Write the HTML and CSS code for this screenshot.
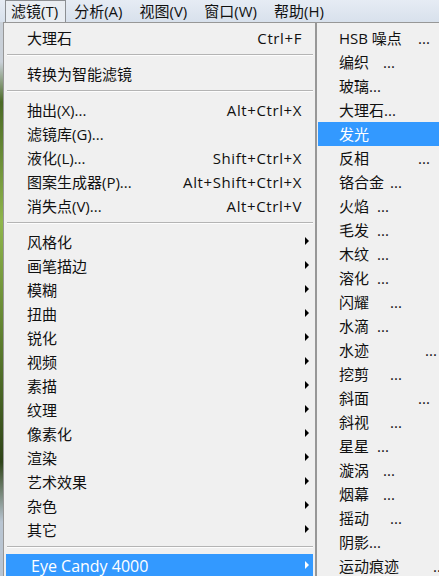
FILE: index.html
```html
<!DOCTYPE html>
<html lang="zh-CN">
<head>
    <meta charset="UTF-8">
    <title>滤镜菜单</title>
    <link rel="stylesheet" href="styles.css">
</head>
<body>
    <div class="menubar">
        <span class="bar-item open">滤镜(T)</span>
        <span class="bar-item">分析(A)</span>
        <span class="bar-item">视图(V)</span>
        <span class="bar-item">窗口(W)</span>
        <span class="bar-item">帮助(H)</span>
    </div>
    <div class="stage">
        <div class="edge"></div>
        <div class="menu">
            <div class="item"><span class="name">大理石</span><span class="key">Ctrl+F</span><span class="arrow"></span></div>
            <div class="sep"></div>
            <div class="item"><span class="name">转换为智能滤镜</span><span class="arrow"></span></div>
            <div class="sep"></div>
            <div class="item"><span class="name">抽出(X)...</span><span class="key">Alt+Ctrl+X</span><span class="arrow"></span></div>
            <div class="item"><span class="name">滤镜库(G)...</span><span class="arrow"></span></div>
            <div class="item"><span class="name">液化(L)...</span><span class="key">Shift+Ctrl+X</span><span class="arrow"></span></div>
            <div class="item"><span class="name">图案生成器(P)...</span><span class="key">Alt+Shift+Ctrl+X</span><span class="arrow"></span></div>
            <div class="item"><span class="name">消失点(V)...</span><span class="key">Alt+Ctrl+V</span><span class="arrow"></span></div>
            <div class="sep"></div>
            <div class="item"><span class="name">风格化</span><span class="arrow sub"></span></div>
            <div class="item"><span class="name">画笔描边</span><span class="arrow sub"></span></div>
            <div class="item"><span class="name">模糊</span><span class="arrow sub"></span></div>
            <div class="item"><span class="name">扭曲</span><span class="arrow sub"></span></div>
            <div class="item"><span class="name">锐化</span><span class="arrow sub"></span></div>
            <div class="item"><span class="name">视频</span><span class="arrow sub"></span></div>
            <div class="item"><span class="name">素描</span><span class="arrow sub"></span></div>
            <div class="item"><span class="name">纹理</span><span class="arrow sub"></span></div>
            <div class="item"><span class="name">像素化</span><span class="arrow sub"></span></div>
            <div class="item"><span class="name">渲染</span><span class="arrow sub"></span></div>
            <div class="item"><span class="name">艺术效果</span><span class="arrow sub"></span></div>
            <div class="item"><span class="name">杂色</span><span class="arrow sub"></span></div>
            <div class="item"><span class="name">其它</span><span class="arrow sub"></span></div>
            <div class="sep"></div>
            <div class="item active eye"><span class="name">Eye Candy 4000</span><span class="arrow sub"></span></div>
        </div>
        <div class="submenu">
            <div class="item"><span class="tab-xl">HSB 噪点</span><span>...</span></div>
            <div class="item"><span class="tab-m">编织</span><span>...</span></div>
            <div class="item"><span>玻璃...</span></div>
            <div class="item"><span>大理石...</span></div>
            <div class="item active"><span>发光</span></div>
            <div class="item"><span class="tab-xl">反相</span><span>...</span></div>
            <div class="item"><span class="tab-l">铬合金</span><span>...</span></div>
            <div class="item"><span class="tab-s">火焰</span><span>...</span></div>
            <div class="item"><span class="tab-s">毛发</span><span>...</span></div>
            <div class="item"><span class="tab-s">木纹</span><span>...</span></div>
            <div class="item"><span class="tab-s">溶化</span><span>...</span></div>
            <div class="item"><span class="tab-l">闪耀</span><span>...</span></div>
            <div class="item"><span class="tab-s">水滴</span><span>...</span></div>
            <div class="item"><span class="tab-xxl">水迹</span><span>...</span></div>
            <div class="item"><span class="tab-l">挖剪</span><span>...</span></div>
            <div class="item"><span class="tab-xl">斜面</span><span>...</span></div>
            <div class="item"><span class="tab-l">斜视</span><span>...</span></div>
            <div class="item"><span class="tab-s">星星</span><span>...</span></div>
            <div class="item"><span class="tab-m">漩涡</span><span>...</span></div>
            <div class="item"><span class="tab-m">烟幕</span><span>...</span></div>
            <div class="item"><span class="tab-l">摇动</span><span>...</span></div>
            <div class="item"><span>阴影...</span></div>
            <div class="item"><span class="tab-end">运动痕迹</span><span>...</span></div>
        </div>
    </div>
</body>
</html>
```

FILE: styles.css
```css
body {
    margin: 0;
    width: 439px;
    height: 576px;
    overflow: hidden;
    background: #f0f0f0;
    font-family: "Open Sans", "Noto Sans CJK SC", sans-serif;
    font-size: 15px;
    color: #111;
}
.menubar {
    height: 22px;
    display: flex;
    align-items: stretch;
    padding-left: 5px;
    background: linear-gradient(to bottom, #e6ecf4, #d8e1ec);
    box-sizing: border-box;
}
.bar-item {
    padding: 0 7px 0 5px;
    margin-right: 3px;
    line-height: 21px;
    border: 1px solid transparent;
    border-bottom: none;
}
.bar-item.open {
    background: #e9edf2;
    border-color: #8c8f93;
    margin-right: 2px;
}
.stage {
    display: flex;
    height: 554px;
}
.edge {
    width: 3px;
    flex: none;
    background: linear-gradient(to bottom, #c9d0d8 0, #c9d0d8 40px, #4b6a26 80px, #8fb64c 200px, #5c7d2e 320px, #2f4419 440px, #b9c5d2 500px, #b9c5d2 100%);
}
/* main filter menu */
.menu {
    width: 313px;
    flex: none;
    box-sizing: border-box;
    border: 1px solid #979797;
    border-bottom: none;
    padding: 3px 2px 0;
    background: #f0f0f0;
}
.item {
    display: flex;
    align-items: center;
    height: 24px;
    line-height: 24px;
    padding-left: 21px;
    white-space: nowrap;
}
.name {
    flex: 1;
}
.key {
    letter-spacing: 0.6px;
}
.arrow {
    width: 11px;
    height: 24px;
    flex: none;
    position: relative;
}
.arrow.sub::after {
    content: "";
    position: absolute;
    left: 3px;
    top: 7px;
    border-left: 4px solid #000;
    border-top: 4px solid transparent;
    border-bottom: 4px solid transparent;
}
.active {
    background: #3399ff;
    color: #fff;
}
.active .arrow.sub::after {
    border-left-color: #fff;
}
.eye {
    padding-left: 25px;
    font-size: 16px;
}
.sep {
    height: 12px;
    box-sizing: border-box;
    padding-top: 4px;
    margin-left: 1px;
}
.sep::before {
    content: "";
    display: block;
    height: 1px;
    background: #b4b4b4;
    border-bottom: 1px solid #fdfdfd;
}
/* Eye Candy submenu */
.submenu {
    width: 150px;
    flex: none;
    border-left: 1px solid #979797;
    border-top: 1px solid #979797;
    padding: 3px 0 0 1px;
    background: #f0f0f0;
}
.tab-s { min-width: 38px; }
.tab-m { min-width: 44px; }
.tab-l { min-width: 51px; }
.tab-xl { min-width: 79px; }
.tab-xxl { min-width: 86px; }
.tab-end { min-width: 94px; }
```
